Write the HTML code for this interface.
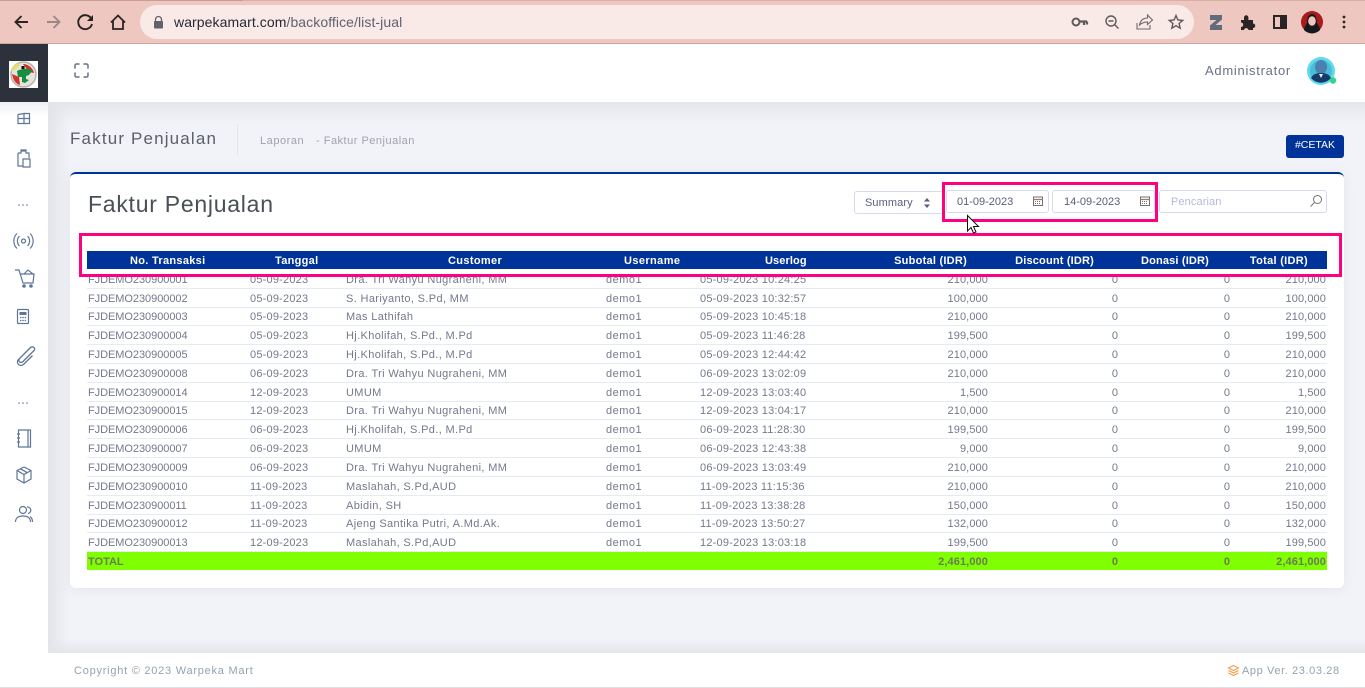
<!DOCTYPE html>
<html><head><meta charset="utf-8"><title>Faktur Penjualan</title>
<style>
*{box-sizing:border-box}
html,body{margin:0;padding:0;width:1365px;height:688px;overflow:hidden;background:#f2f3f8;font-family:"Liberation Sans",sans-serif}
.a{position:absolute}
svg{position:absolute;overflow:visible}
.r{position:absolute;left:87px;width:1240px;height:19px;border-bottom:1px solid #e3ebf3;font-size:11px;color:#74788d;line-height:18px}
.r span{position:absolute;top:1px;white-space:nowrap}
.r span:nth-child(1){left:1px;letter-spacing:-.05px}
.r span:nth-child(2){left:163px;letter-spacing:.2px}
.r span:nth-child(3){left:259px;letter-spacing:.36px}
.r span:nth-child(4){left:519px;letter-spacing:.5px}
.r span:nth-child(5){left:613px;letter-spacing:.22px}
.r span:nth-child(6){right:339px;letter-spacing:.1px}
.r span:nth-child(7){right:209px}
.r span:nth-child(8){right:97px}
.r span:nth-child(9){right:1px;letter-spacing:.1px}
.h{position:absolute;top:252px;height:18px;line-height:18px;font-size:11px;font-weight:bold;color:#fff;white-space:nowrap;letter-spacing:.3px}
.t{position:absolute;top:553px;height:18px;line-height:18px;font-size:11px;font-weight:bold;color:#6d7a5a;white-space:nowrap}
.box{position:absolute;background:#fff;border:1px solid #d6d9ef;border-radius:3px;font-size:11px;color:#595d7c;white-space:nowrap}
.side{stroke:#5f7696;fill:none;stroke-width:1.2}
</style></head>
<body>
<!-- browser chrome -->
<div class="a" style="left:0;top:0;width:1365px;height:44px;background:#eec8c0;border-bottom:1px solid #cfa49c"></div>
<div class="a" style="left:0;top:0;width:243px;height:1px;background:#c99d95"></div>
<div class="a" style="left:243px;top:0;width:1122px;height:1px;background:#d9b0a8"></div>
<div class="a" style="left:140px;top:5px;width:1054px;height:34px;border-radius:17px;background:#f9e9e7"></div>
<svg style="left:0;top:0" width="140" height="44" fill="none">
<path d="M28 22H15.5M21.5 16l-6 6 6 6" stroke="#2a2423" stroke-width="1.9"/>
<path d="M47 22h12.5M53.5 16l6 6-6 6" stroke="#9c8784" stroke-width="1.9"/>
<path d="M91.5 19a7 7 0 1 0 .5 5" stroke="#2a2423" stroke-width="1.9"/><path d="M93 15v6h-6z" fill="#2a2423"/>
<path d="M111 22.5l7-7 7 7M113 21v8h10v-8" stroke="#2a2423" stroke-width="1.8"/>
</svg>
<svg style="left:153px;top:16px" width="12" height="13"><path d="M2.500 5V3.500a3 3 0 0 1 6 0V5" fill="none" stroke="#5f6368" stroke-width="1.300"/><rect x="1" y="5" width="9" height="7.500" rx="1" fill="#5f6368"/></svg>
<div class="a" style="left:174px;top:13px;font-size:14px;line-height:18px;letter-spacing:.08px;color:#5d6370;white-space:nowrap"><span style="color:#242a38">warpekamart.com</span>/backoffice/list-jual</div>
<svg style="left:1000px;top:0" width="365" height="44" fill="none">
<circle cx="76" cy="22" r="3.500" stroke="#5f5a59" stroke-width="2"/><path d="M79 21.500h8M84 22v3M87 21.500v3" stroke="#5f5a59" stroke-width="2.200"/>
<circle cx="111" cy="21" r="5" stroke="#5f5a59" stroke-width="1.400"/><path d="M108.500 21h5M114.500 24.500l4 4" stroke="#5f5a59" stroke-width="1.400"/>
<path d="M137 23v6h13v-4M139.500 25c1-5 4-7 8-7v-3l5 5-5 4.500V22c-3 0-6 1-8 3z" stroke="#6e6a69" stroke-width="1.100"/>
<path d="M176 15.500l1.900 4.500 4.800.4-3.600 3.100 1.100 4.700-4.200-2.500-4.200 2.500 1.100-4.700-3.600-3.100 4.800-.4z" stroke="#5f5a59" stroke-width="1.400"/>
<path d="M210 15h12v4.500l-6.500 5.500h6.500v5h-12v-4.500l6.500-5.500H210z" fill="#5e6d79"/>
<path d="M241 20h3v-2.500a2.200 2.200 0 0 1 4.400 0V20h4.600v3.500a2.200 2.200 0 0 1 0 4.500V30h-4.500a2.300 2.300 0 0 0-4.500 0H241v-3a2.200 2.200 0 0 0 0-4.500z" fill="#2a2423"/>
<rect x="274" y="16" width="12" height="12" stroke="#2a2423" stroke-width="2"/><rect x="280" y="16" width="6" height="12" fill="#2a2423"/>
<circle cx="344" cy="17" r="1.400" fill="#2a2423"/><circle cx="344" cy="22" r="1.400" fill="#2a2423"/><circle cx="344" cy="27" r="1.400" fill="#2a2423"/>
</svg>
<svg style="left:1301px;top:11px" width="22" height="22"><circle cx="11" cy="11" r="11" fill="#a81c1c"/><path d="M3 19c0-3 2-5 3-7 0-6 2-9 5-9s5 3 5 9c1 2 3 4 3 7a11 11 0 0 1-16 0z" fill="#16181f"/><ellipse cx="11" cy="10" rx="3.800" ry="4.800" fill="#efc6be"/></svg>

<!-- layout shell -->
<div class="a" style="left:48px;top:102px;width:1317px;height:551px;background:#f2f3f8"></div>
<div class="a" style="left:48px;top:102px;width:1317px;height:22px;background:linear-gradient(#e4e6ec,#f2f3f8)"></div>
<div class="a" style="left:48px;top:102px;width:22px;height:551px;background:linear-gradient(90deg,#e2e4ea,rgba(242,243,248,0))"></div>
<div class="a" style="left:48px;top:640px;width:1317px;height:13px;background:linear-gradient(rgba(226,228,234,0),#e4e6ec)"></div>
<div class="a" style="left:0;top:44px;width:48px;height:644px;background:#fff"></div>
<div class="a" style="left:0;top:102px;width:48px;height:14px;background:linear-gradient(#eceef1,#fff)"></div>
<div class="a" style="left:48px;top:44px;width:1317px;height:58px;background:#fff"></div>
<div class="a" style="left:0;top:44px;width:48px;height:58px;background:#2b323b"></div>
<div class="a" style="left:9px;top:61px;width:29px;height:27px;background:#fff"></div>
<svg style="left:9px;top:61px" width="29" height="27"><circle cx="14.500" cy="13.500" r="12.500" fill="#e6e3dc" stroke="#b5b3aa" stroke-width="1.500"/><path d="M2 10a13 13 0 0 1 7-8l2 2-5 5z" fill="#e3df70"/><path d="M14 3c5 0 10 4 11 9l-5-1zM3 13l7 3 1 8c-4-1-7-5-8-11z" fill="#d6302c"/><path d="M8 10c5-3 13-3 15 0l-3 4-3 1v3l3 1-4 3-3-1v-5H9z" fill="#138f3e"/><rect x="12.500" y="5" width="3" height="3" fill="#111"/></svg>
<svg style="left:74px;top:63px" width="16" height="16" fill="none" stroke="#6a7187" stroke-width="1.500" stroke-linecap="round"><path d="M1 5V2.500A1.500 1.500 0 0 1 2.500 1H5M10 1h2.500A1.500 1.500 0 0 1 14 2.500V5M14 10v2.500a1.500 1.500 0 0 1-1.500 1.500H10M5 14H2.500A1.500 1.500 0 0 1 1 12.500V10"/></svg>
<div class="a" style="left:1205px;top:62px;font-size:13px;line-height:17px;letter-spacing:.72px;color:#6a7187;white-space:nowrap">Administrator</div>
<svg style="left:1307px;top:57px" width="30" height="30"><circle cx="14" cy="14" r="14" fill="#5fd9ee"/><circle cx="14" cy="14" r="11" fill="#49bcd6"/><ellipse cx="14" cy="10" rx="6" ry="7" fill="#4c80ae"/><path d="M4 21c2-4 6-5 10-5s8 1 10 5a13 13 0 0 1-20 0z" fill="#173a6a"/><path d="M12 17h4l-2 4z" fill="#e8f4fa"/><circle cx="26" cy="23.500" r="3.200" fill="#2ed68c"/></svg>

<!-- sidebar icons -->
<svg class="side" style="left:0;top:102px" width="48" height="450">
<path d="M18 12.500l6-1v5h-6zM24 11.500h5.500v5H24zM18 16.500h6v5h-6zM24 16.500h5.500v5H24z"/>
<path d="M18 51h3v-2h5v2h3v5M18 51v13h5M21 49v-1h5v1M23 57h7v8h-7z"/>
<circle cx="19" cy="103" r=".8" fill="#5f7696" stroke="none"/><circle cx="23" cy="103" r=".8" fill="#5f7696" stroke="none"/><circle cx="27" cy="103" r=".8" fill="#5f7696" stroke="none"/>
<circle cx="23.500" cy="139" r="2"/><path d="M19.500 134a7 7 0 0 0 0 10M27.500 134a7 7 0 0 1 0 10M17 131.500a10.500 10.500 0 0 0 0 15M30 131.500a10.500 10.500 0 0 1 0 15"/>
<path d="M15 168h4l4 13h10l1-9H20M24 172l4-4 5 4"/><circle cx="24" cy="184" r="1.200" fill="#5f7696"/><circle cx="31" cy="184" r="1.200" fill="#5f7696"/>
<rect x="17.500" y="207.500" width="11" height="14" rx="1"/><rect x="19.500" y="210" width="7" height="3" fill="#5f7696" stroke="none"/><path d="M20 215.500h6M20 218.500h6" stroke-width="1.300" stroke-dasharray="1.500 .8"/>
<path d="M31 245l-11 11c-3 3 .5 6 3 3.500l11-11c2-2-1-5-3.500-3l-12 12c-3 3 1 8 5 5l9-9" stroke-width="1.300"/>
<circle cx="19" cy="301" r=".8" fill="#5f7696" stroke="none"/><circle cx="23" cy="301" r=".8" fill="#5f7696" stroke="none"/><circle cx="27" cy="301" r=".8" fill="#5f7696" stroke="none"/>
<path d="M18.500 328h12v17h-12zM28 328v17M17 332h3M17 336h3M17 340h3"/>
<path d="M24 365l7 3.500v8.500l-7 4-7-4v-8.500zM17 368.500l7 4 7-4M24 372.500v8M20.500 366.800l7 4" />
<circle cx="23" cy="408" r="3.500"/><path d="M15.500 420c0-4 3-6 7.500-6s7.500 2 7.500 6M27 405a3 3 0 0 1 1 6.500M30 414.500c1.500 1 2.500 3 2.500 5.500"/>
</svg>

<!-- page title -->
<div class="a" style="left:70px;top:128px;font-size:17px;line-height:21px;letter-spacing:1.160px;color:#5b5f66;white-space:nowrap">Faktur Penjualan</div>
<div class="a" style="left:237px;top:124px;width:1px;height:31px;background:#e2e4ea"></div>
<div class="a" style="left:260px;top:134px;font-size:11px;line-height:14px;letter-spacing:.55px;color:#a0a3ac;white-space:nowrap">Laporan</div>
<div class="a" style="left:316px;top:134px;font-size:11px;line-height:14px;letter-spacing:.5px;color:#a0a3ac;white-space:nowrap">- Faktur Penjualan</div>
<div class="a" style="left:1286px;top:135px;width:58px;height:23px;border-radius:3px;background:#00339a;color:#fff;font-size:10.500px;line-height:21px;text-align:center;white-space:nowrap">#CETAK</div>

<!-- card -->
<div class="a" style="left:70px;top:172px;width:1274px;height:416px;background:#fff;border-top:2px solid #00339a;border-radius:6px;box-shadow:0 2px 12px rgba(70,80,110,.08)"></div>
<div class="a" style="left:88px;top:190px;font-size:23px;line-height:28px;letter-spacing:.74px;color:#4a4f58;white-space:nowrap">Faktur Penjualan</div>

<div class="box" style="left:854px;top:191px;width:90px;height:23px;line-height:23px;padding-left:10px;letter-spacing:.1px">Summary</div>
<svg style="left:923px;top:198px" width="8" height="10"><path d="M4 0l3 3.500H1zM4 10l3-3.500H1z" fill="#595d7c"/></svg>
<div class="box" style="left:946px;top:190px;width:103px;height:23px;line-height:22px;padding-left:10px">01-09-2023</div>
<div class="box" style="left:1052px;top:190px;width:103px;height:23px;line-height:22px;padding-left:11px">14-09-2023</div>
<div class="box" style="left:1159px;top:190px;width:168px;height:23px;line-height:22px;padding-left:11px;color:#b4b8dc;letter-spacing:.1px">Pencarian</div>
<svg style="left:1033px;top:196px" width="10" height="10" fill="none" stroke="#70727a"><rect x=".5" y="1" width="9" height="8.500"/><path d="M.5 3.500h9" stroke="#a07c5c" stroke-width="1.300"/><path d="M2 5.500h6M2 7.500h6" stroke-dasharray="1 1"/></svg>
<svg style="left:1140px;top:196px" width="10" height="10" fill="none" stroke="#70727a"><rect x=".5" y="1" width="9" height="8.500"/><path d="M.5 3.500h9" stroke="#a07c5c" stroke-width="1.300"/><path d="M2 5.500h6M2 7.500h6" stroke-dasharray="1 1"/></svg>
<svg style="left:1310px;top:195px" width="12" height="12" fill="none" stroke="#70727a"><circle cx="7.500" cy="4.500" r="4"/><path d="M4.500 7.500L.5 11.500"/></svg>

<!-- table -->
<div class="a" style="left:87px;top:251px;width:1240px;height:18px;background:#00339a"></div>
<div class="h" style="left:130px">No. Transaksi</div>
<div class="h" style="left:275px">Tanggal</div>
<div class="h" style="left:448px;letter-spacing:.35px">Customer</div>
<div class="h" style="left:624px;letter-spacing:.4px">Username</div>
<div class="h" style="left:765px;letter-spacing:.1px">Userlog</div>
<div class="h" style="right:398px;letter-spacing:.25px">Subotal (IDR)</div>
<div class="h" style="right:271px;letter-spacing:.18px">Discount (IDR)</div>
<div class="h" style="right:156px;letter-spacing:.17px">Donasi (IDR)</div>
<div class="h" style="right:57px">Total (IDR)</div>

<div class="r" style="top:270px"><span>FJDEMO230900001</span><span>05-09-2023</span><span>Dra. Tri Wahyu Nugraheni, MM</span><span>demo1</span><span>05-09-2023 10:24:25</span><span>210,000</span><span>0</span><span>0</span><span>210,000</span></div>
<div class="r" style="top:289px"><span>FJDEMO230900002</span><span>05-09-2023</span><span>S. Hariyanto, S.Pd, MM</span><span>demo1</span><span>05-09-2023 10:32:57</span><span>100,000</span><span>0</span><span>0</span><span>100,000</span></div>
<div class="r" style="top:307px"><span>FJDEMO230900003</span><span>05-09-2023</span><span>Mas Lathifah</span><span>demo1</span><span>05-09-2023 10:45:18</span><span>210,000</span><span>0</span><span>0</span><span>210,000</span></div>
<div class="r" style="top:326px"><span>FJDEMO230900004</span><span>05-09-2023</span><span>Hj.Kholifah, S.Pd., M.Pd</span><span>demo1</span><span>05-09-2023 11:46:28</span><span>199,500</span><span>0</span><span>0</span><span>199,500</span></div>
<div class="r" style="top:345px"><span>FJDEMO230900005</span><span>05-09-2023</span><span>Hj.Kholifah, S.Pd., M.Pd</span><span>demo1</span><span>05-09-2023 12:44:42</span><span>210,000</span><span>0</span><span>0</span><span>210,000</span></div>
<div class="r" style="top:364px"><span>FJDEMO230900008</span><span>06-09-2023</span><span>Dra. Tri Wahyu Nugraheni, MM</span><span>demo1</span><span>06-09-2023 13:02:09</span><span>210,000</span><span>0</span><span>0</span><span>210,000</span></div>
<div class="r" style="top:383px"><span>FJDEMO230900014</span><span>12-09-2023</span><span>UMUM</span><span>demo1</span><span>12-09-2023 13:03:40</span><span>1,500</span><span>0</span><span>0</span><span>1,500</span></div>
<div class="r" style="top:401px"><span>FJDEMO230900015</span><span>12-09-2023</span><span>Dra. Tri Wahyu Nugraheni, MM</span><span>demo1</span><span>12-09-2023 13:04:17</span><span>210,000</span><span>0</span><span>0</span><span>210,000</span></div>
<div class="r" style="top:420px"><span>FJDEMO230900006</span><span>06-09-2023</span><span>Hj.Kholifah, S.Pd., M.Pd</span><span>demo1</span><span>06-09-2023 11:28:30</span><span>199,500</span><span>0</span><span>0</span><span>199,500</span></div>
<div class="r" style="top:439px"><span>FJDEMO230900007</span><span>06-09-2023</span><span>UMUM</span><span>demo1</span><span>06-09-2023 12:43:38</span><span>9,000</span><span>0</span><span>0</span><span>9,000</span></div>
<div class="r" style="top:458px"><span>FJDEMO230900009</span><span>06-09-2023</span><span>Dra. Tri Wahyu Nugraheni, MM</span><span>demo1</span><span>06-09-2023 13:03:49</span><span>210,000</span><span>0</span><span>0</span><span>210,000</span></div>
<div class="r" style="top:477px"><span>FJDEMO230900010</span><span>11-09-2023</span><span>Maslahah, S.Pd,AUD</span><span>demo1</span><span>11-09-2023 11:15:36</span><span>210,000</span><span>0</span><span>0</span><span>210,000</span></div>
<div class="r" style="top:496px"><span>FJDEMO230900011</span><span>11-09-2023</span><span>Abidin, SH</span><span>demo1</span><span>11-09-2023 13:38:28</span><span>150,000</span><span>0</span><span>0</span><span>150,000</span></div>
<div class="r" style="top:514px"><span>FJDEMO230900012</span><span>11-09-2023</span><span>Ajeng Santika Putri, A.Md.Ak.</span><span>demo1</span><span>11-09-2023 13:50:27</span><span>132,000</span><span>0</span><span>0</span><span>132,000</span></div>
<div class="r" style="top:533px"><span>FJDEMO230900013</span><span>12-09-2023</span><span>Maslahah, S.Pd,AUD</span><span>demo1</span><span>12-09-2023 13:03:18</span><span>199,500</span><span>0</span><span>0</span><span>199,500</span></div>

<div class="a" style="left:87px;top:552px;width:1240px;height:18px;background:#7fff00"></div>
<div class="t" style="left:88px">TOTAL</div>
<div class="t" style="right:377px;letter-spacing:.1px">2,461,000</div>
<div class="t" style="right:247px">0</div>
<div class="t" style="right:135px">0</div>
<div class="t" style="right:39px;letter-spacing:.1px">2,461,000</div>

<!-- annotations -->
<div class="a" style="left:79px;top:233px;width:1263px;height:44px;border:3px solid #ff007f"></div>
<div class="a" style="left:942px;top:182px;width:216px;height:40px;border:3px solid #ff007f"></div>
<svg style="left:967px;top:215px" width="14" height="20"><path d="M.5.500v15.500l3.500-3.500 2.500 5.500 2.500-1-2.500-5.500h5z" fill="#fff" stroke="#111" stroke-width="1"/></svg>

<!-- footer -->
<div class="a" style="left:48px;top:653px;width:1317px;height:35px;background:#fff;border-bottom:1px solid #dbe2e6"></div>
<div class="a" style="left:0;top:687px;width:48px;height:1px;background:#dbe2e6"></div>
<div class="a" style="left:74px;top:663px;font-size:11px;line-height:16px;letter-spacing:.76px;color:#94a3ad;white-space:nowrap">Copyright © 2023 Warpeka Mart</div>
<svg style="left:1228px;top:665px" width="11" height="11" fill="none" stroke="#f59b4c" stroke-width="1.100"><path d="M5.500.5l5 2.500-5 2.500-5-2.500zM.5 5.500l5 2.500 5-2.500M.5 8l5 2.500 5-2.500"/></svg>
<div class="a" style="left:1242px;top:663px;font-size:11px;line-height:16px;letter-spacing:.6px;color:#94a3ad;white-space:nowrap">App Ver. 23.03.28</div>
</body></html>
